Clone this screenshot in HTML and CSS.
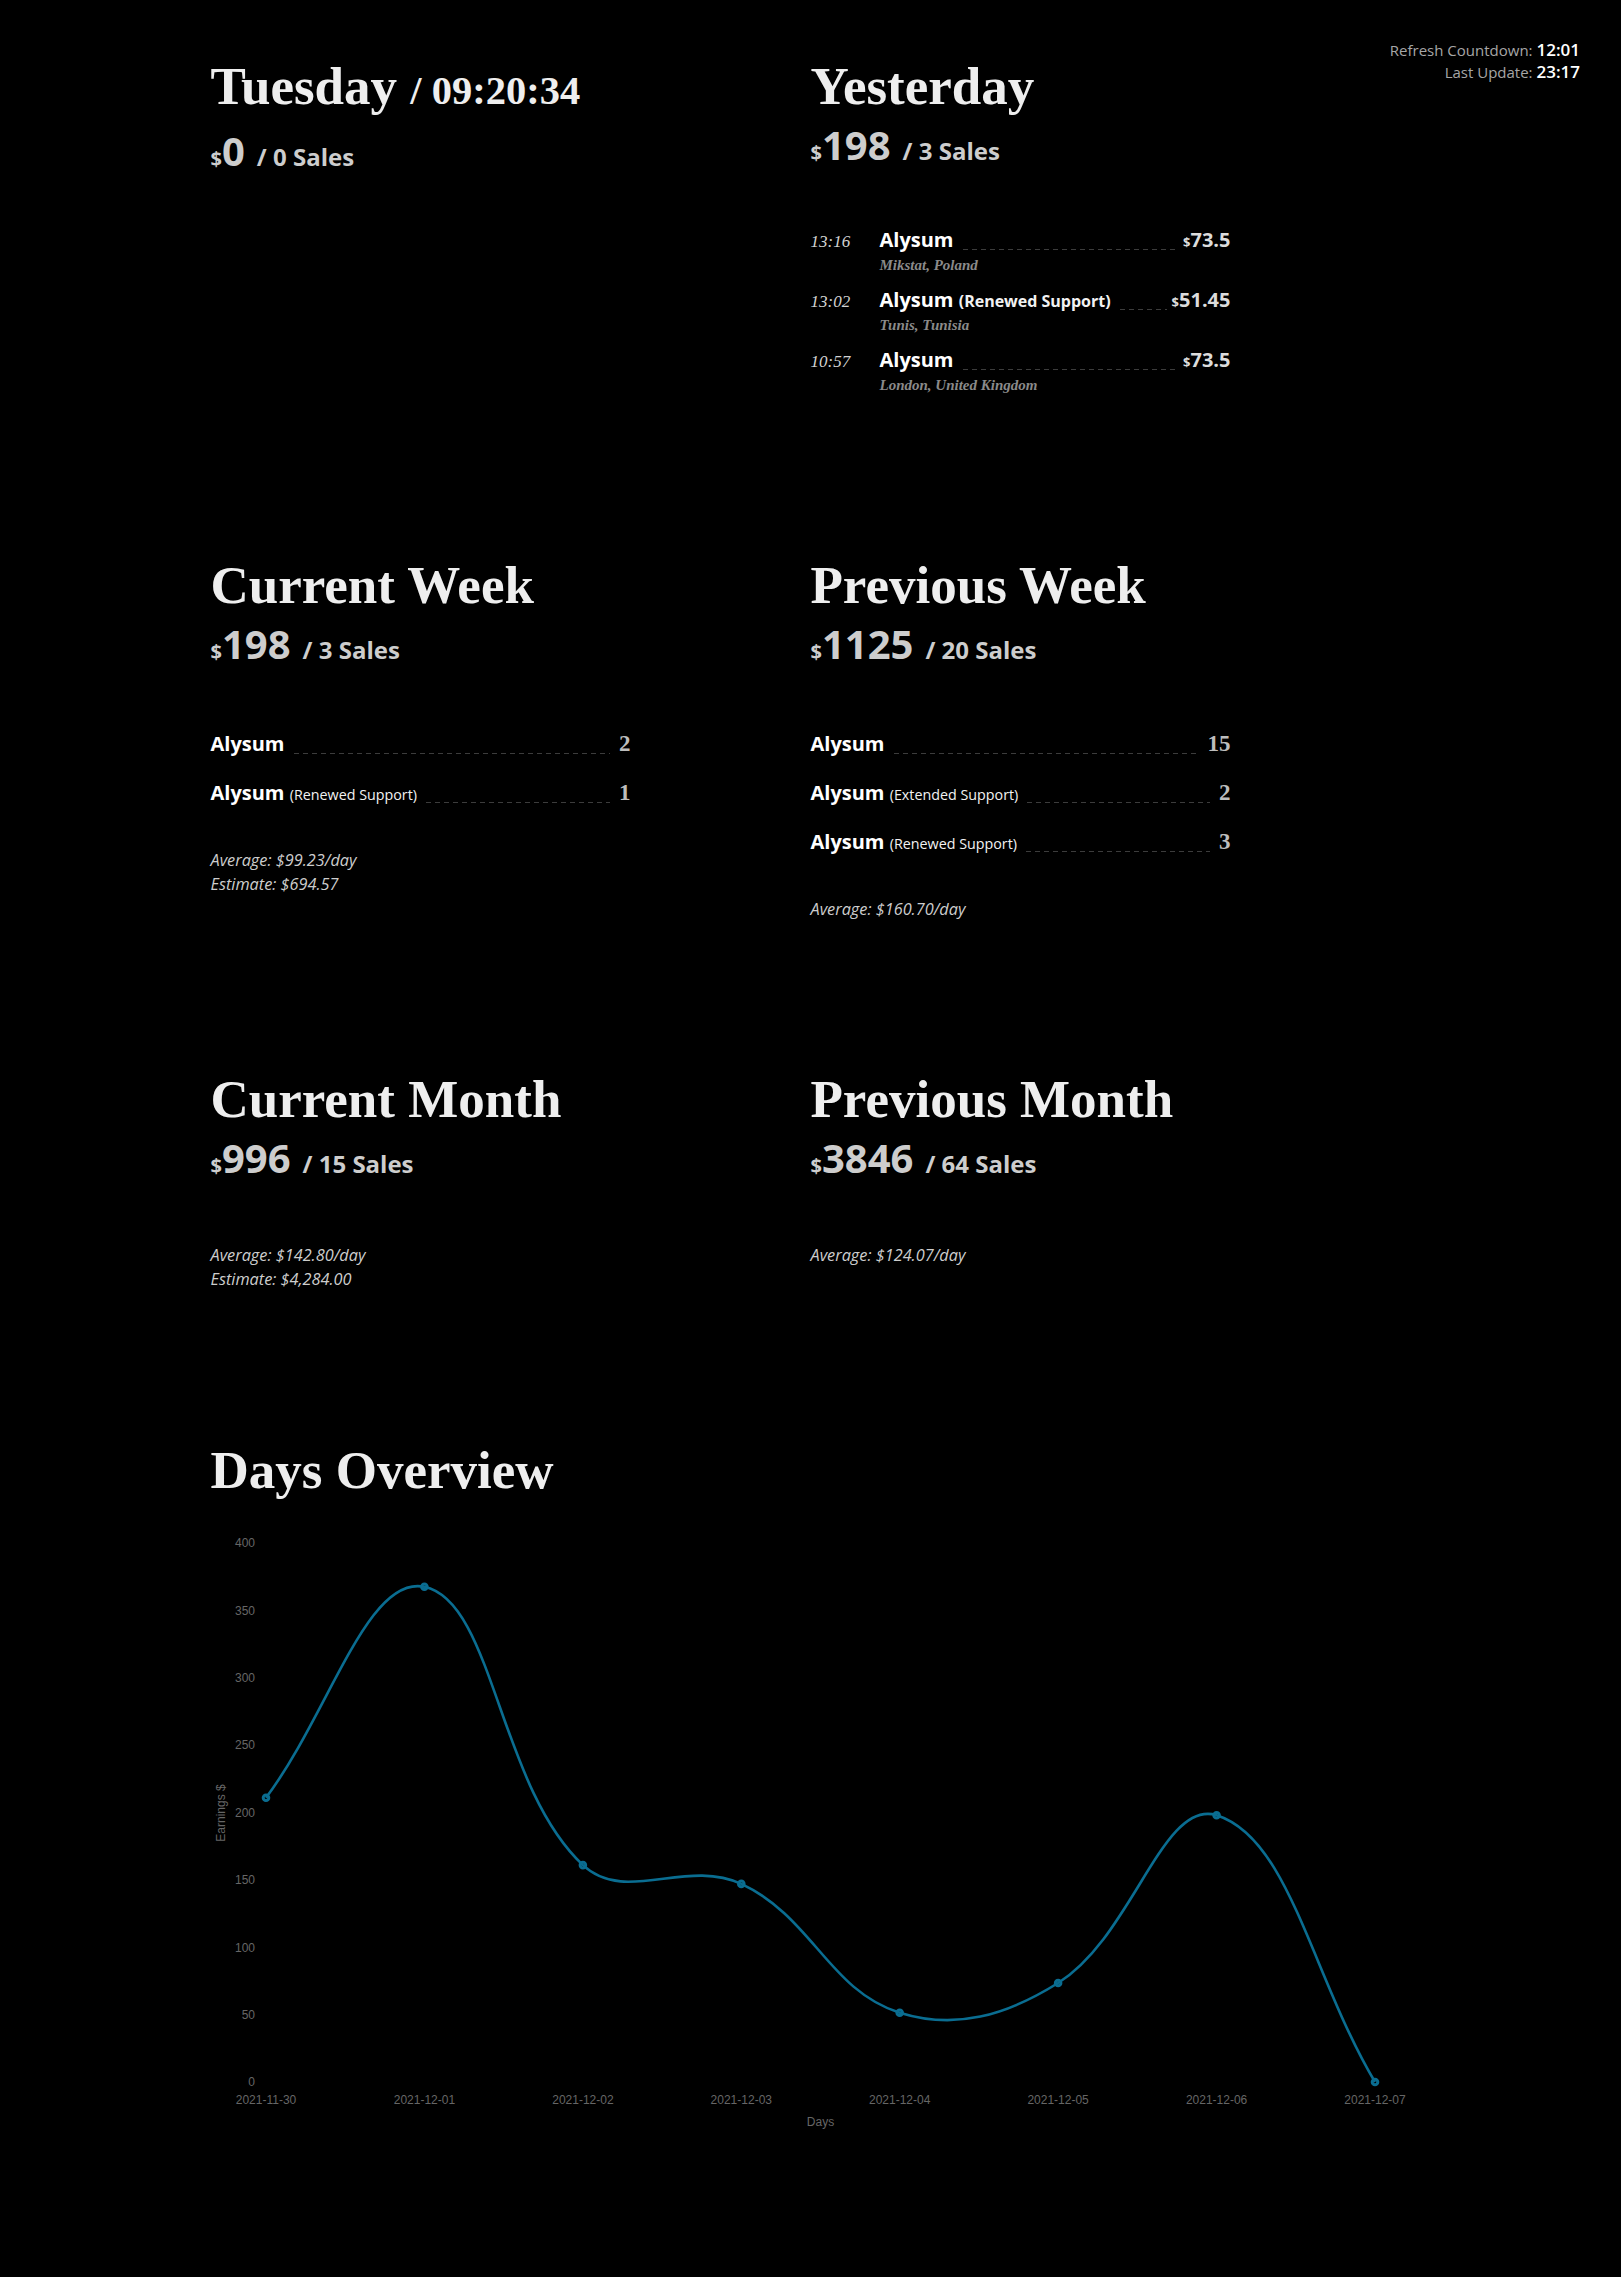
FILE: index.html
```html
<!DOCTYPE html>
<html lang="en">
<head>
<meta charset="utf-8">
<title>Sales Dashboard</title>
<link rel="stylesheet" href="styles.css">
</head>
<body>
<div class="status">
  <div class="status-line">Refresh Countdown: <b>12:01</b></div>
  <div class="status-line">Last Update: <b>23:17</b></div>
</div>
<main class="page">
  <section class="row row--first">
    <div class="col">
      <h1 class="title">Tuesday <small class="title-time">/ 09:20:34</small></h1>
      <div class="sales sales--today"><span class="cur">$</span><span class="amount">0</span><span class="qty">/ 0 Sales</span></div>
    </div>
    <div class="col">
      <h1 class="title">Yesterday</h1>
      <div class="sales"><span class="cur">$</span><span class="amount">198</span><span class="qty">/ 3 Sales</span></div>
      <ul class="sale-list">
        <li class="sale">
          <span class="sale-time">13:16</span>
          <div class="sale-body">
            <div class="sale-line"><span class="pname">Alysum</span><span class="dots"></span><span class="price"><span class="price-cur">$</span>73.5</span></div>
            <div class="sale-loc">Mikstat, Poland</div>
          </div>
        </li>
        <li class="sale">
          <span class="sale-time">13:02</span>
          <div class="sale-body">
            <div class="sale-line"><span class="pname">Alysum <small class="variant variant--bold">(Renewed Support)</small></span><span class="dots"></span><span class="price"><span class="price-cur">$</span>51.45</span></div>
            <div class="sale-loc">Tunis, Tunisia</div>
          </div>
        </li>
        <li class="sale">
          <span class="sale-time">10:57</span>
          <div class="sale-body">
            <div class="sale-line"><span class="pname">Alysum</span><span class="dots"></span><span class="price"><span class="price-cur">$</span>73.5</span></div>
            <div class="sale-loc">London, United Kingdom</div>
          </div>
        </li>
      </ul>
    </div>
  </section>

  <section class="row row--week">
    <div class="col">
      <h1 class="title">Current Week</h1>
      <div class="sales"><span class="cur">$</span><span class="amount">198</span><span class="qty">/ 3 Sales</span></div>
      <ul class="prod-list">
        <li class="prod"><span class="pname">Alysum</span><span class="dots"></span><span class="num">2</span></li>
        <li class="prod"><span class="pname">Alysum <small class="variant">(Renewed Support)</small></span><span class="dots"></span><span class="num">1</span></li>
      </ul>
      <div class="stats">
        <div>Average: $99.23/day</div>
        <div>Estimate: $694.57</div>
      </div>
    </div>
    <div class="col">
      <h1 class="title">Previous Week</h1>
      <div class="sales"><span class="cur">$</span><span class="amount">1125</span><span class="qty">/ 20 Sales</span></div>
      <ul class="prod-list">
        <li class="prod"><span class="pname">Alysum</span><span class="dots"></span><span class="num">15</span></li>
        <li class="prod"><span class="pname">Alysum <small class="variant">(Extended Support)</small></span><span class="dots"></span><span class="num">2</span></li>
        <li class="prod"><span class="pname">Alysum <small class="variant">(Renewed Support)</small></span><span class="dots"></span><span class="num">3</span></li>
      </ul>
      <div class="stats">
        <div>Average: $160.70/day</div>
      </div>
    </div>
  </section>

  <section class="row">
    <div class="col">
      <h1 class="title">Current Month</h1>
      <div class="sales"><span class="cur">$</span><span class="amount">996</span><span class="qty">/ 15 Sales</span></div>
      <div class="stats stats--solo">
        <div>Average: $142.80/day</div>
        <div>Estimate: $4,284.00</div>
      </div>
    </div>
    <div class="col">
      <h1 class="title">Previous Month</h1>
      <div class="sales"><span class="cur">$</span><span class="amount">3846</span><span class="qty">/ 64 Sales</span></div>
      <div class="stats stats--solo">
        <div>Average: $124.07/day</div>
      </div>
    </div>
  </section>

  <section class="overview">
    <h1 class="title">Days Overview</h1>
    <svg class="chart" viewBox="0 0 1200 610" width="1200" height="610" aria-label="Earnings per day">
      <g class="axis-y">
        <text x="44" y="17.3">400</text>
        <text x="44" y="84.7">350</text>
        <text x="44" y="152">300</text>
        <text x="44" y="219.4">250</text>
        <text x="44" y="286.8">200</text>
        <text x="44" y="354.2">150</text>
        <text x="44" y="421.5">100</text>
        <text x="44" y="488.9">50</text>
        <text x="44" y="556.3">0</text>
      </g>
      <g class="axis-x">
        <text x="55" y="574.3">2021-11-30</text>
        <text x="213.4" y="574.3">2021-12-01</text>
        <text x="371.9" y="574.3">2021-12-02</text>
        <text x="530.3" y="574.3">2021-12-03</text>
        <text x="688.7" y="574.3">2021-12-04</text>
        <text x="847.1" y="574.3">2021-12-05</text>
        <text x="1005.6" y="574.3">2021-12-06</text>
        <text x="1164" y="574.3">2021-12-07</text>
      </g>
      <text class="axis-title" x="609.5" y="596.3">Days</text>
      <text class="axis-title" transform="translate(14.3 283) rotate(-90)">Earnings $</text>
      <path class="series" d="M55,267.7 C118.4,183.3 156.2,44.6 213.4,56.8 C282.9,71.6 287.3,255.8 371.9,335.1 C414.1,374.6 474.7,328 530.3,353.9 C601.5,387.1 617.9,460.6 688.7,482.7 C744.6,500.2 795,485.5 847.1,453 C921.7,406.5 951.5,268.3 1005.6,285.2 C1078.3,307.9 1100.6,445.3 1164,552"/>
      <g class="points">
        <circle cx="55" cy="267.7" r="2.8"/>
        <circle cx="213.4" cy="56.8" r="2.8"/>
        <circle cx="371.9" cy="335.1" r="2.8"/>
        <circle cx="530.3" cy="353.9" r="2.8"/>
        <circle cx="688.7" cy="482.7" r="2.8"/>
        <circle cx="847.1" cy="453" r="2.8"/>
        <circle cx="1005.6" cy="285.2" r="2.8"/>
        <circle cx="1164" cy="552" r="2.8"/>
      </g>
    </svg>
  </section>
</main>
</body>
</html>
```

FILE: styles.css
```css
* { box-sizing: border-box; }

html, body {
  margin: 0;
  background: #000;
}

body {
  position: relative;
  min-height: 2277px;
  font-family: "Open Sans", "Liberation Sans", sans-serif;
  color: #eee;
}

/* top-right refresh info */
.status {
  position: absolute;
  top: 39px;
  right: 41px;
  text-align: right;
  font-size: 15px;
  line-height: 21px;
  color: #a6a6a6;
}
.status b {
  font-size: 17px;
  font-weight: 600;
  color: #fff;
}

.page {
  width: 1200px;
  margin: 0 auto;
  padding-top: 55.5px;
}

.row {
  display: grid;
  grid-template-columns: 600px 600px;
  align-items: start;
  margin-bottom: 149px;
}
.row--first { margin-bottom: 159px; }
.row--week { margin-bottom: 147.5px; }

.title {
  margin: 0;
  font-family: "Liberation Serif", "DejaVu Serif", serif;
  font-weight: 700;
  font-size: 53px;
  line-height: 60px;
  color: #eee;
}
.title-time {
  font-size: 40.5px;
}

/* totals line */
.sales {
  display: flex;
  align-items: baseline;
  margin-top: 9.2px;
  font-weight: 700;
  color: #cdcdcd;
}
.sales--today { margin-top: 10px; }
.sales .cur {
  font-size: 20px;
  line-height: 20px;
}
.sales .amount {
  font-size: 40px;
  line-height: 40px;
}
.sales .qty {
  margin-left: 12px;
  font-size: 24px;
  line-height: 24px;
}

.pname {
  font-size: 20px;
  line-height: 28px;
  font-weight: 700;
  color: #fff;
  white-space: nowrap;
}
.variant {
  font-size: 14.3px;
  font-weight: 400;
  color: #f2f2f2;
}
.variant--bold {
  font-size: 16px;
  font-weight: 700;
}

.dots {
  flex: 1;
  align-self: flex-end;
  height: 1px;
  margin: 0 9px 4px 9px;
  background: repeating-linear-gradient(to right, #3c3c3c 0 5px, transparent 5px 9px);
}

/* yesterday's sales */
.sale-list {
  list-style: none;
  margin: 61.5px 0 0;
  padding: 0;
  width: 420px;
  display: flex;
  flex-direction: column;
  gap: 10px;
}
.sale {
  display: flex;
  align-items: baseline;
}
.sale-time {
  flex: none;
  width: 69px;
  font-family: "Liberation Serif", serif;
  font-style: italic;
  font-size: 17px;
  color: #d2d2d2;
}
.sale-body {
  flex: 1;
  min-width: 0;
}
.sale-line {
  display: flex;
  align-items: baseline;
  height: 28px;
}
.sale-line .dots { margin-right: 5px; }
.price {
  font-size: 20px;
  line-height: 28px;
  font-weight: 700;
  color: #dcdcdc;
}
.price-cur { font-size: 13px; }
.sale-loc {
  font-family: "Liberation Serif", serif;
  font-style: italic;
  font-weight: 700;
  font-size: 15px;
  line-height: 22px;
  color: #8a8a8a;
}

/* products per period */
.prod-list {
  list-style: none;
  margin: 65.5px 0 0;
  padding: 0;
  width: 420px;
  display: flex;
  flex-direction: column;
  gap: 21px;
}
.prod {
  display: flex;
  align-items: baseline;
  height: 28px;
}
.num {
  font-family: "Liberation Serif", serif;
  font-weight: 700;
  font-size: 23px;
  line-height: 28px;
  color: #bdbdbd;
}

.stats {
  margin-top: 41.5px;
  font-style: italic;
  font-size: 16.3px;
  line-height: 24px;
  color: #cdcdcd;
}
.stats--solo { margin-top: 64.5px; }

/* chart */
.chart {
  display: block;
  margin-top: 30.6px;
  overflow: visible;
  font-family: "Liberation Sans", Arial, sans-serif;
  font-size: 12px;
}
.axis-y text {
  fill: #666;
  text-anchor: end;
}
.axis-x text {
  fill: #666;
  text-anchor: middle;
}
.axis-title {
  fill: #666;
  text-anchor: middle;
}
.series {
  fill: none;
  stroke: #0a6d91;
  stroke-width: 2.6;
}
.points circle {
  fill: none;
  stroke: #0a6d91;
  stroke-width: 3;
}
```
